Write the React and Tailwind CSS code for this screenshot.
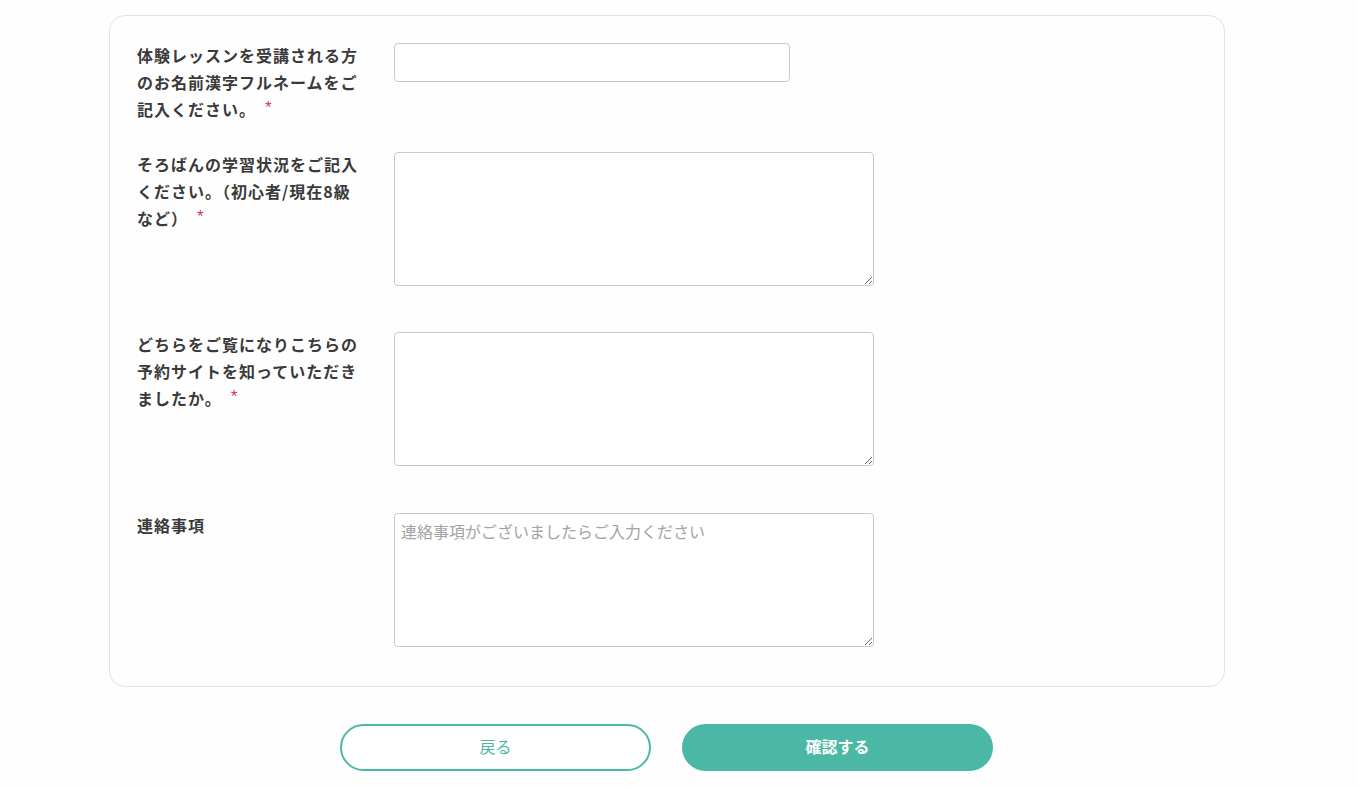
import React from "react";

const font = { fontFamily: '"Noto Sans CJK JP", "Noto Sans", sans-serif' };

function Req() {
  return (
    <span
      className="ml-[9px] inline-block align-top mt-[3px] text-[17px] leading-none font-normal text-[#d6355c]"
      style={{ fontFamily: '"Liberation Sans", Arial, sans-serif' }}
    >
      *
    </span>
  );
}

function Label({ children, req }) {
  return (
    <div className="w-[257px] shrink-0 pr-[31px] mt-[-1px]">
      <p className="text-[16px] leading-[27px] font-bold tracking-[1px] text-[#3a3a3a]">
        {children}
        {req && <Req />}
      </p>
    </div>
  );
}

export default function App() {
  return (
    <div className="min-h-screen bg-[#fefefe] pt-[15px] pb-[20px]" style={font}>
      <div className="ml-[109px] w-[1116px] rounded-[16px] border border-[#e3e3e3] bg-[#fefefe] pl-[27px] pt-[27px] pb-[39px]">
        <div className="flex pb-[29px]">
          <Label req>体験レッスンを受講される方のお名前漢字フルネームをご記入ください。</Label>
          <input
            type="text"
            className="block h-[39px] w-[396px] rounded-[4px] border border-[#c9c9c9] bg-white px-2 outline-none"
          />
        </div>
        <div className="flex pb-[46px]">
          <Label req>そろばんの学習状況をご記入ください。（初心者/現在8級など）</Label>
          <textarea className="block h-[134px] w-[480px] rounded-[4px] border border-[#c9c9c9] bg-white px-[7px] py-[6px] outline-none" />
        </div>
        <div className="flex pb-[47px]">
          <Label req>どちらをご覧になりこちらの予約サイトを知っていただきましたか。</Label>
          <textarea className="block h-[134px] w-[480px] rounded-[4px] border border-[#c9c9c9] bg-white px-[7px] py-[6px] outline-none" />
        </div>
        <div className="flex">
          <Label>連絡事項</Label>
          <textarea
            placeholder="連絡事項がございましたらご入力ください"
            className="block h-[134px] w-[480px] rounded-[4px] border border-[#c9c9c9] bg-white px-[6px] py-[4px] text-[16px] leading-[26px] text-[#333] placeholder:text-[#a3a3a3] outline-none"
          />
        </div>
      </div>
      <div className="mt-[37px] flex justify-center gap-[31px] pr-[25px]">
        <button className="h-[47px] w-[311px] rounded-full border-2 border-[#4bb8a5] bg-white pb-[3px] text-[16px] text-[#4bb8a5]">
          戻る
        </button>
        <button className="h-[47px] w-[311px] rounded-full bg-[#4bb8a5] pb-[3px] text-[16px] font-bold text-white">
          確認する
        </button>
      </div>
    </div>
  );
}
